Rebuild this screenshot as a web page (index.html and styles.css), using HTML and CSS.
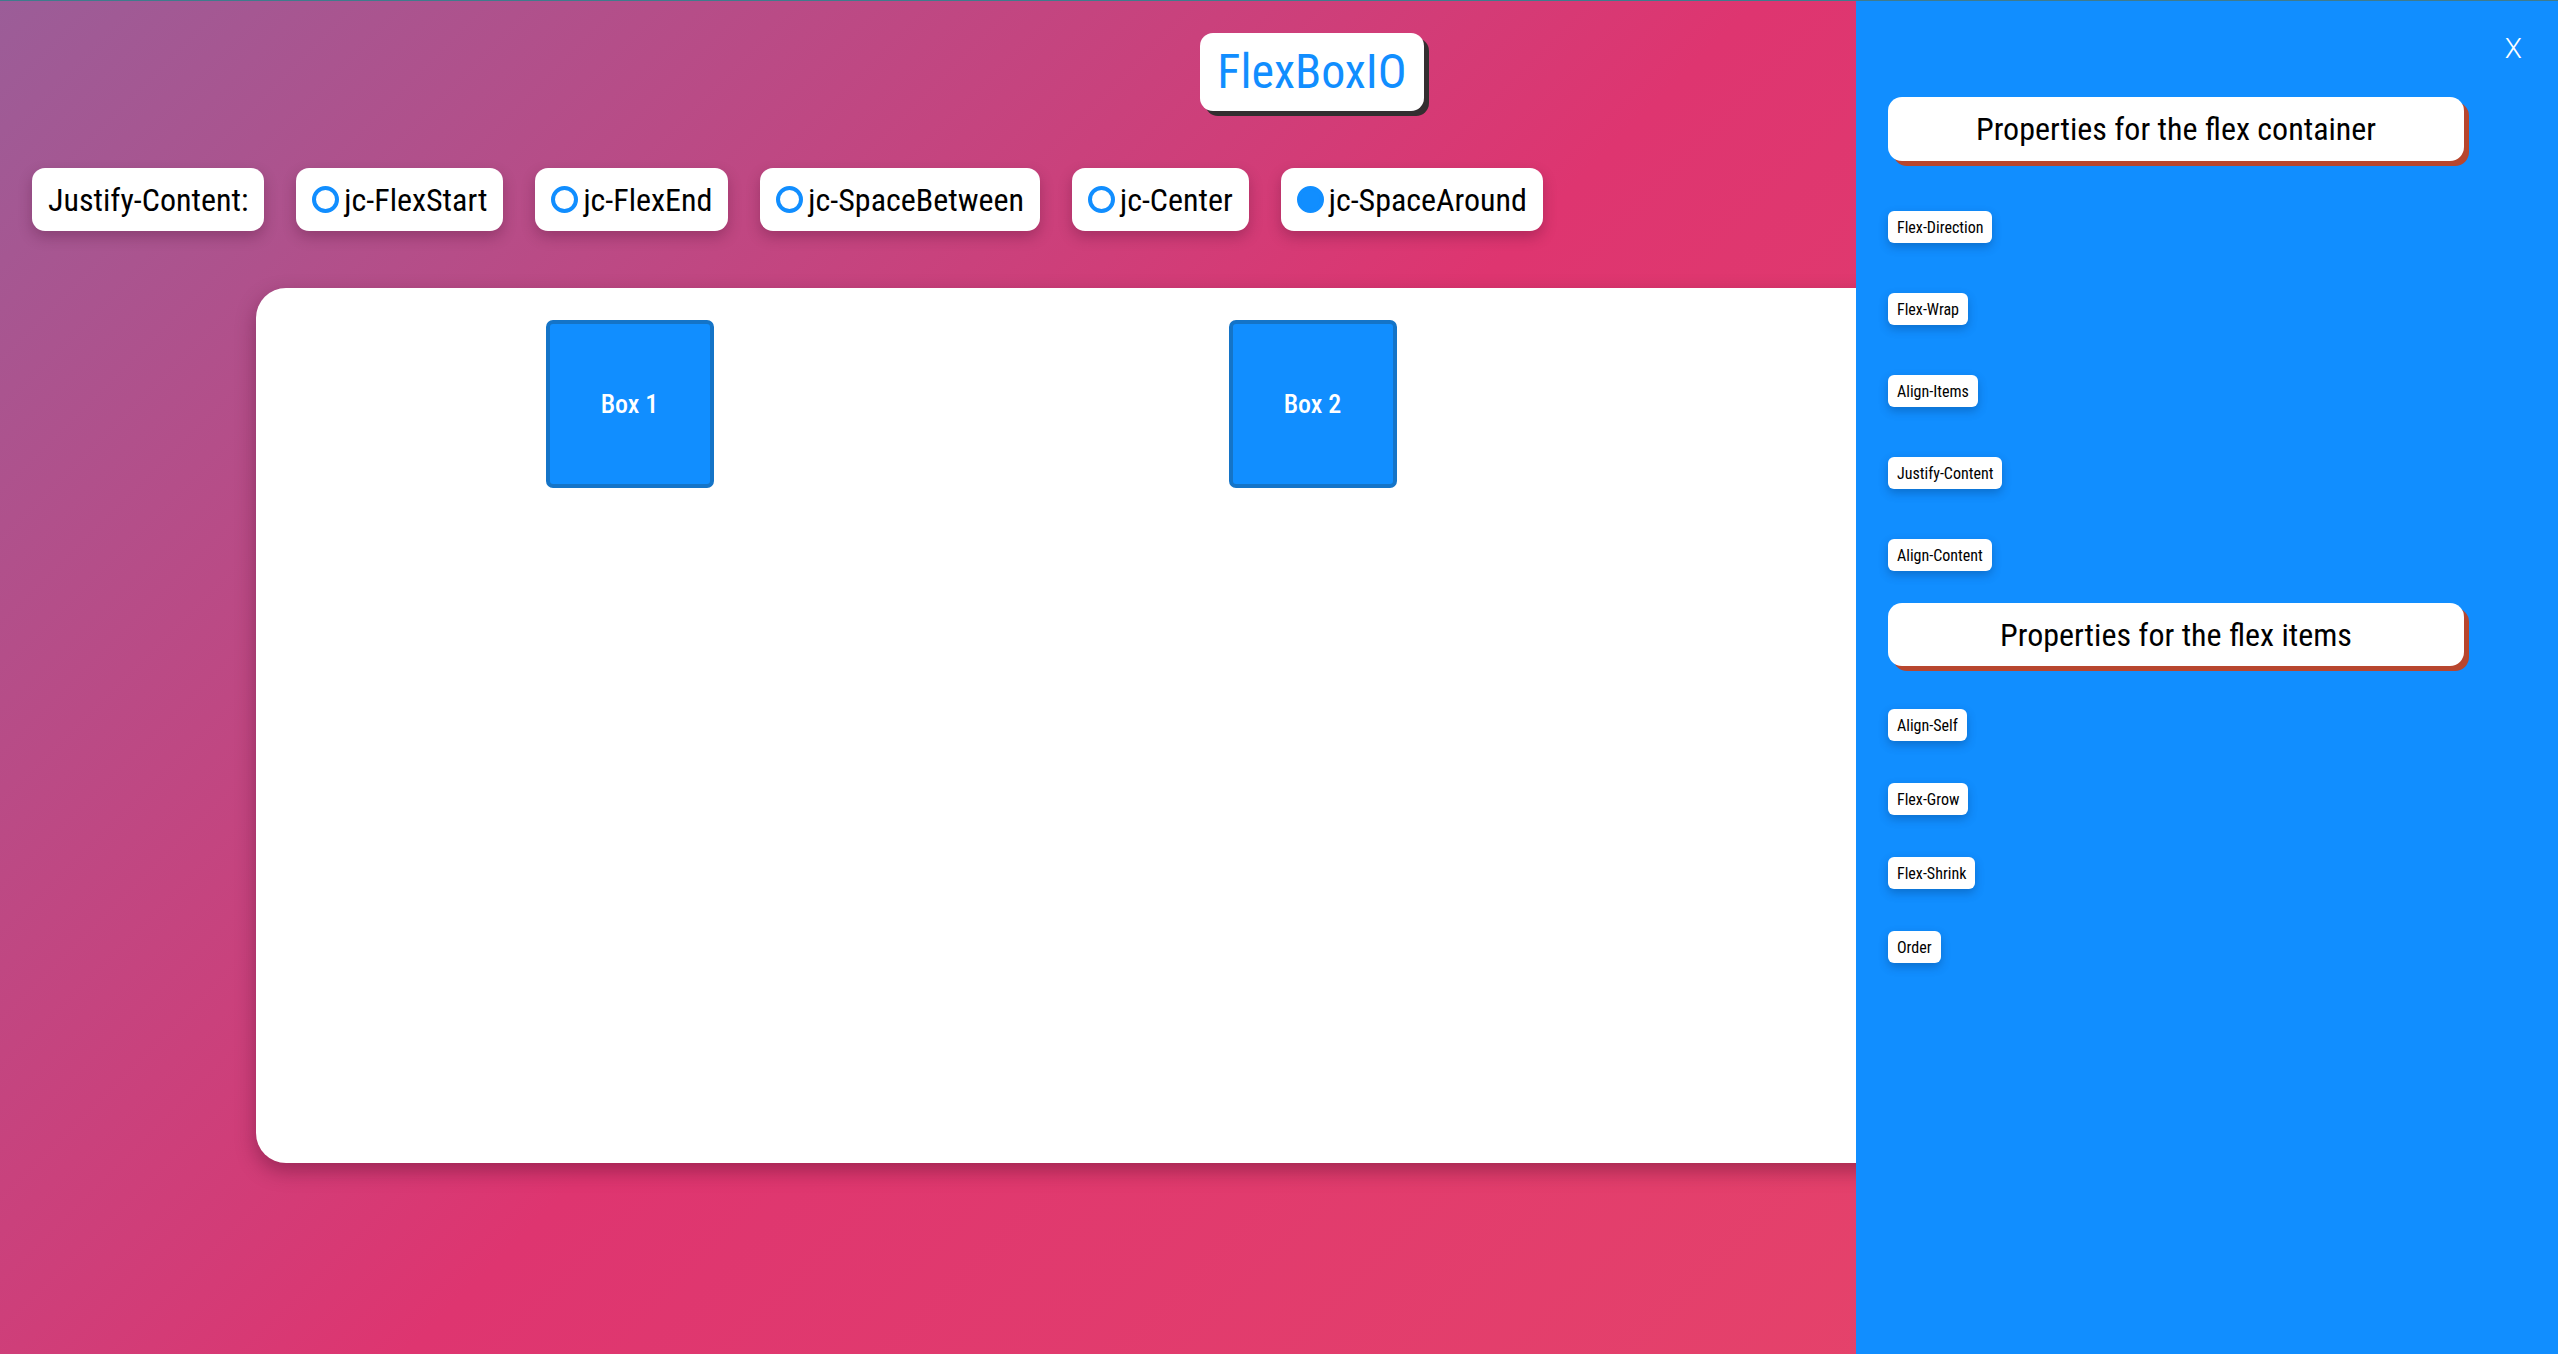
FILE: index.html
```html
<!DOCTYPE html>
<html lang="en">
<head>
<meta charset="utf-8">
<title>FlexBoxIO</title>
<link rel="stylesheet" href="styles.css">
</head>
<body>
  <main class="main">
    <div class="title-row">
      <h1 class="brand">FlexBoxIO</h1>
    </div>
    <div class="controls">
      <div class="chip chip-label">Justify-Content:</div>
      <label class="chip"><span class="radio"></span>jc-FlexStart</label>
      <label class="chip"><span class="radio"></span>jc-FlexEnd</label>
      <label class="chip"><span class="radio"></span>jc-SpaceBetween</label>
      <label class="chip"><span class="radio"></span>jc-Center</label>
      <label class="chip"><span class="radio is-checked"></span>jc-SpaceAround</label>
    </div>
    <section class="stage">
      <div class="box-row">
        <div class="box">Box 1</div>
        <div class="box">Box 2</div>
      </div>
    </section>
  </main>

  <aside class="drawer">
    <button class="close" type="button">X</button>
    <div class="section-title">Properties for the flex container</div>
    <div class="props props-container">
      <span class="prop">Flex-Direction</span>
      <span class="prop">Flex-Wrap</span>
      <span class="prop">Align-Items</span>
      <span class="prop">Justify-Content</span>
      <span class="prop">Align-Content</span>
    </div>
    <div class="section-title section-title-items">Properties for the flex items</div>
    <div class="props props-items">
      <span class="prop">Align-Self</span>
      <span class="prop">Flex-Grow</span>
      <span class="prop">Flex-Shrink</span>
      <span class="prop">Order</span>
    </div>
  </aside>
</body>
</html>
```

FILE: styles.css
```css
* { box-sizing: border-box; }

html, body { height: 100%; }

body {
  margin: 0;
  position: relative;
  overflow: hidden;
  border-top: 1px solid #3f7b8c;
  font-family: "Roboto Condensed", Roboto, "Liberation Sans Narrow", "Liberation Sans", sans-serif;
  font-stretch: condensed;
  background: linear-gradient(135deg, #9b5d98 0%, #de3570 45%, #e84868 100%);
  color: #000;
}

.main {
  width: 100%;
}

.title-row {
  display: flex;
  justify-content: center;
  padding: 32px 0 0 66px;
}

.brand {
  margin: 0;
  background: #fff;
  color: #118eff;
  font-size: 48px;
  font-weight: 400;
  line-height: 57px;
  padding: 10px 17px 11px;
  border-radius: 13px;
  box-shadow: 5px 5px 0 #332e30;
}

.controls {
  display: flex;
  gap: 32px;
  padding: 0 32px;
  margin-top: 57px;
}

.chip {
  display: flex;
  align-items: center;
  height: 63px;
  padding: 0 16px;
  background: #fff;
  border-radius: 13px;
  font-size: 32px;
  box-shadow: 0 6px 14px rgba(60, 10, 40, 0.28);
}

.radio {
  width: 27px;
  height: 27px;
  border: 4px solid #118eff;
  border-radius: 50%;
  margin-right: 5px;
  flex: none;
}

.radio.is-checked {
  background: #118eff;
}

.stage {
  margin: 57px 0 0 256px;
  width: 2046px;
  height: 875px;
  padding: 32px;
  background: #fff;
  border-radius: 30px;
  box-shadow: 0 8px 20px rgba(70, 10, 40, 0.4);
}

.box-row {
  display: flex;
  justify-content: space-around;
  align-items: flex-start;
  width: 1366px;
}

.box {
  width: 168px;
  height: 168px;
  display: flex;
  align-items: center;
  justify-content: center;
  background: #118eff;
  border: 4px solid #1474c8;
  border-radius: 7px;
  color: #fff;
  font-size: 26px;
  font-weight: 500;
}

.drawer {
  position: absolute;
  top: 0;
  right: 0;
  width: 702px;
  height: 100%;
  background: #118eff;
  padding: 96px 0 0 32px;
}

.close {
  position: absolute;
  top: 29px;
  right: 36px;
  background: none;
  border: 0;
  padding: 0;
  color: #fff;
  font-family: Roboto, "Liberation Sans", sans-serif;
  font-stretch: normal;
  font-size: 28px;
  font-weight: 300;
  line-height: 38px;
  cursor: pointer;
}

.section-title {
  width: 576px;
  height: 64px;
  display: flex;
  align-items: center;
  justify-content: center;
  background: #fff;
  border-radius: 14px;
  font-size: 32px;
  box-shadow: 5px 5px 0 #b8462e;
}

.section-title-items {
  margin-top: 32px;
  height: 63px;
}

.props {
  display: flex;
  flex-direction: column;
  align-items: flex-start;
}

.props-container {
  margin-top: 50px;
  gap: 50px;
}

.props-items {
  margin-top: 43px;
  gap: 42px;
}

.prop {
  display: flex;
  align-items: center;
  height: 32px;
  padding: 0 9px;
  background: #fff;
  border-radius: 6px;
  font-size: 16px;
  box-shadow: 0 4px 10px rgba(0, 40, 90, 0.3);
}
```
